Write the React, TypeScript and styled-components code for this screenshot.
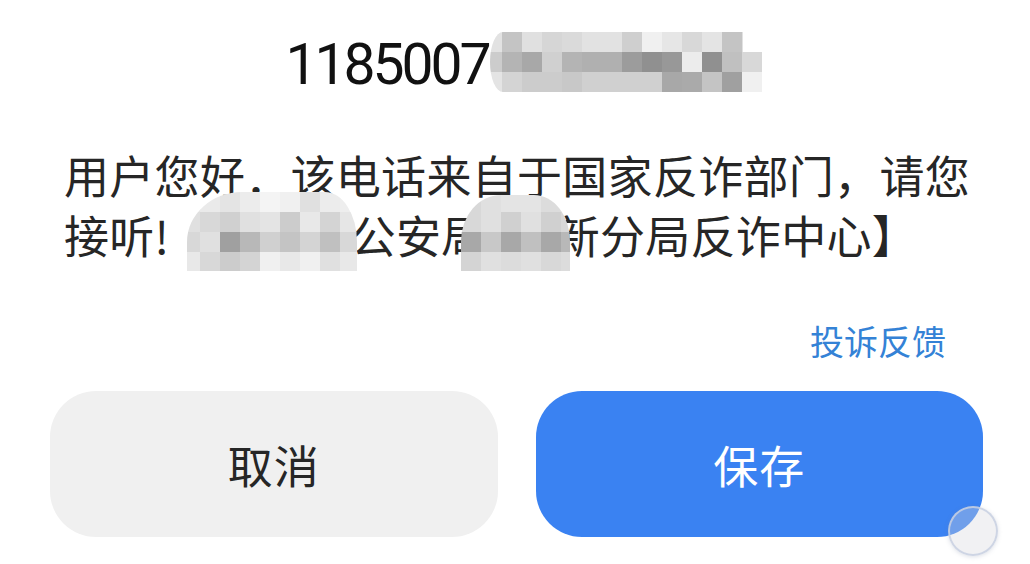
import * as React from 'react';
import styled, { createGlobalStyle } from 'styled-components';

const GlobalStyle = createGlobalStyle`
  html, body {
    margin: 0;
    padding: 0;
    background: #fff;
  }
  body {
    font-family: 'Noto Sans CJK SC', 'Noto Sans', sans-serif;
  }
`;

// grey levels (two hex digits) of the privacy mosaic, row by row; null = no cell
type Cells = (string | null)[][];

const numberCells: Cells = [
  ['e2', 'c4', 'e0', 'd6', 'da', 'e2', 'e2', 'cf', 'f0', 'e6', 'd8', 'e4', 'c4', null],
  ['cc', 'b4', 'a8', 'd0', 'b4', 'b0', 'b0', '9c', '90', '98', 'ec', '90', 'c0', 'd8'],
  ['e4', 'd4', 'cc', 'cc', 'c8', 'd0', 'd0', 'd0', 'd0', 'a8', 'aa', 'c4', 'a0', 'f0'],
];

const cityCells: Cells = [
  ['e6', 'ea', 'e4', 'ec', 'f4', 'f0', 'e0', 'ec', 'ee'],
  ['e0', 'd8', 'd0', 'e0', 'e4', 'cc', 'e8', 'd4', 'e6'],
  ['d8', 'e0', 'a0', 'b8', 'd0', 'c4', 'd4', 'c0', 'd8'],
  ['e8', 'd8', 'cc', 'd4', 'f0', 'e8', 'f0', 'e0', 'e8'],
];

const districtCells: Cells = [
  ['d8', 'e0', 'e4', 'e4', 'dc', 'd8'],
  ['d8', 'e0', 'd0', 'e0', 'd0', 'd8'],
  ['a8', 'c8', 'a8', 'c0', 'a8', 'b8'],
  ['d4', 'e0', 'dc', 'e0', 'd8', 'dc'],
];

const Screen = styled.div`
  position: relative;
  width: 1030px;
  height: 564px;
  overflow: hidden;
  box-sizing: border-box;
  padding-top: 35px;
  display: flex;
  flex-direction: column;
`;

const NumberRow = styled.div`
  display: flex;
  justify-content: center;
  align-items: flex-start;
  padding-left: 17px;
  height: 60px;
`;

const PhoneNumber = styled.span`
  font-family: Roboto, 'Liberation Sans', sans-serif;
  font-size: 57px;
  line-height: 60px;
  letter-spacing: -3px;
  color: #111;
`;

const Blur = styled.div<{ $radius: string }>`
  flex: none;
  overflow: hidden;
  line-height: 0;
  border-radius: ${(p) => p.$radius};
  svg {
    display: block;
  }
`;

const NumberBlur = styled(Blur)`
  margin-top: -3px;
  margin-left: 1px;
`;

const OverlayBlur = styled(Blur)<{ $left: number; $top: number }>`
  position: absolute;
  left: ${(p) => p.$left}px;
  top: ${(p) => p.$top}px;
`;

const Message = styled.p`
  position: relative;
  margin: 50px 0 0;
  padding: 0 50px 0 64px;
  font-size: 45px;
  line-height: 60px;
  letter-spacing: 0.3px;
  color: #262626;
`;

const LinkRow = styled.div`
  display: flex;
  justify-content: flex-end;
  padding-right: 84px;
  margin-top: 56px;
`;

const FeedbackLink = styled.a`
  font-size: 34px;
  line-height: 40px;
  color: #3482d6;
  text-decoration: none;
  cursor: pointer;
`;

const ButtonRow = styled.div`
  display: flex;
  gap: 38px;
  padding: 0 47px 0 50px;
  margin-top: 30px;
`;

const ActionButton = styled.button<{ $primary?: boolean }>`
  flex: 1;
  height: 146px;
  border: none;
  border-radius: 46px;
  font-family: 'Noto Sans CJK SC', sans-serif;
  font-size: 45px;
  letter-spacing: 1px;
  background: ${(p) => (p.$primary ? '#3a82f2' : '#f0f0f0')};
  color: ${(p) => (p.$primary ? '#fff' : '#262626')};
  cursor: pointer;
`;

const FloatBall = styled.div`
  position: absolute;
  right: 32px;
  bottom: 8px;
  width: 46px;
  height: 46px;
  border-radius: 50%;
  background: rgba(216, 216, 222, 0.35);
  border: 2px solid rgba(200, 208, 226, 0.85);
  box-shadow: 0 1px 4px rgba(120, 130, 160, 0.25);
`;

interface MosaicProps {
  cells: Cells;
  x0: number;
  y0: number;
  view: [number, number, number, number];
}

const Mosaic: React.FC<MosaicProps> = ({ cells, x0, y0, view }) => {
  const [vx, vy, vw, vh] = view;
  return (
    <svg width={vw} height={vh} viewBox={`${vx} ${vy} ${vw} ${vh}`}>
      {cells.map((row, r) =>
        row.map((g, c) =>
          g ? (
            <rect
              key={`${r}-${c}`}
              x={x0 + c * 20}
              y={y0 + r * 20}
              width={20.5}
              height={20.5}
              fill={`#${g}${g}${g}`}
            />
          ) : null
        )
      )}
    </svg>
  );
};

export default function App() {
  return (
    <>
      <GlobalStyle />
      <Screen>
        <NumberRow>
          <PhoneNumber>1185007</PhoneNumber>
          <NumberBlur $radius="13px 0 0 13px / 30px 0 0 30px">
            <Mosaic cells={numberCells} x0={481} y0={32} view={[489, 32, 272, 60]} />
          </NumberBlur>
        </NumberRow>

        <Message>
          用户您好．该电话来自于国家反诈部门，请您接听!【某某市公安局某{'\u2002'}新分局反诈中心】
          <OverlayBlur $left={187} $top={47} $radius="55px 32px 0 0 / 50px 50px 0 0">
            <Mosaic cells={cityCells} x0={180} y0={192} view={[187, 192, 170, 79]} />
          </OverlayBlur>
          <OverlayBlur $left={461} $top={50} $radius="40px 36px 0 0 / 46px 46px 0 0">
            <Mosaic cells={districtCells} x0={461} y0={192} view={[461, 195, 109, 76]} />
          </OverlayBlur>
        </Message>

        <LinkRow>
          <FeedbackLink>投诉反馈</FeedbackLink>
        </LinkRow>

        <ButtonRow>
          <ActionButton>取消</ActionButton>
          <ActionButton $primary>保存</ActionButton>
        </ButtonRow>

        <FloatBall />
      </Screen>
    </>
  );
}
